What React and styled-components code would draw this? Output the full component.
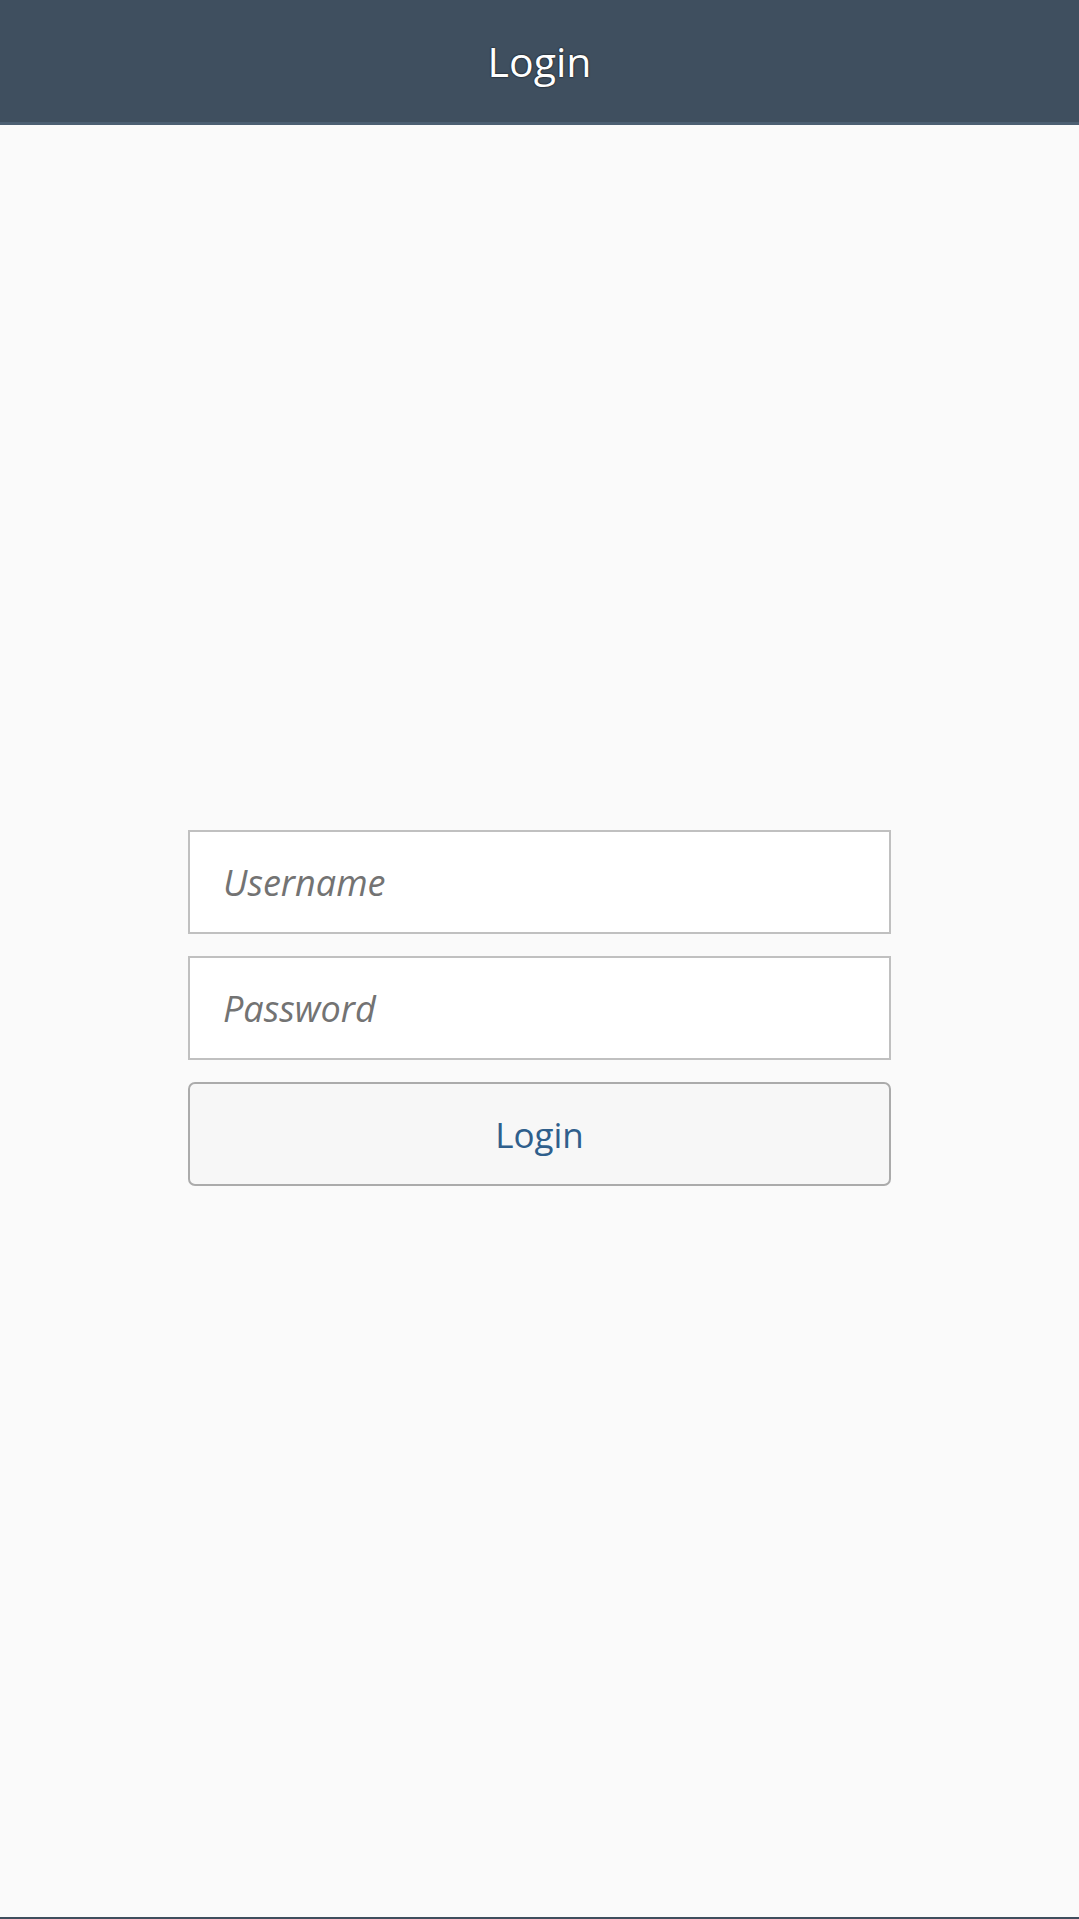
import styled, { createGlobalStyle } from 'styled-components'


const GlobalStyle = createGlobalStyle`
	* {
		box-sizing: border-box;
	}

	body {
		margin: 0;
		background: #fafafa;
		font-family: "Open Sans", "Noto Sans", sans-serif;
	}
`


const App = () => {
	return (
		<Page>
			<GlobalStyle />

			<Header>
				<Title>Login</Title>
			</Header>

			<Content>
				<Form onSubmit={e => e.preventDefault()}>
					<Field type="text" placeholder="Username" />
					<Field type="password" placeholder="Password" />
					<LoginButton type="submit">Login</LoginButton>
				</Form>
			</Content>
		</Page>
	)
}


export default App


const Page = styled.div`
	min-height: 100vh;

	display: flex;
	flex-direction: column;

	background: #fafafa;
	border-bottom: 2px solid #3f4e5d;
`

const Header = styled.header`
	height: 125px;

	display: flex;
	justify-content: center;
	align-items: center;

	background: #3f4f5f;
	border-bottom: 3px solid #4c5f72;
`

const Title = styled.h1`
	margin: 0;

	font-size: 41px;
	font-weight: normal;
	color: #ffffff;
	text-shadow: 0 0 2px #000000;
`

const Content = styled.main`
	flex: 1;
	padding-bottom: 26px;

	display: flex;
	justify-content: center;
	align-items: center;
`

const Form = styled.form`
	width: 703px;

	display: flex;
	flex-direction: column;
	gap: 22px;
`

const Field = styled.input`
	height: 104px;
	padding: 0 33px;

	font-family: "Open Sans", "Noto Sans", sans-serif;
	font-size: 36px;
	color: #333333;
	background: #ffffff;
	border: 2px solid #c0c0c0;
	border-radius: 0;
	outline: none;

	&::placeholder {
		font-style: italic;
		color: #737373;
	}
`

const LoginButton = styled.button`
	height: 104px;

	font-family: "Open Sans", "Noto Sans", sans-serif;
	font-size: 35px;
	color: #2f5f8c;
	background: #f7f7f7;
	border: 2px solid #ababab;
	border-radius: 7px;
	cursor: pointer;
`
